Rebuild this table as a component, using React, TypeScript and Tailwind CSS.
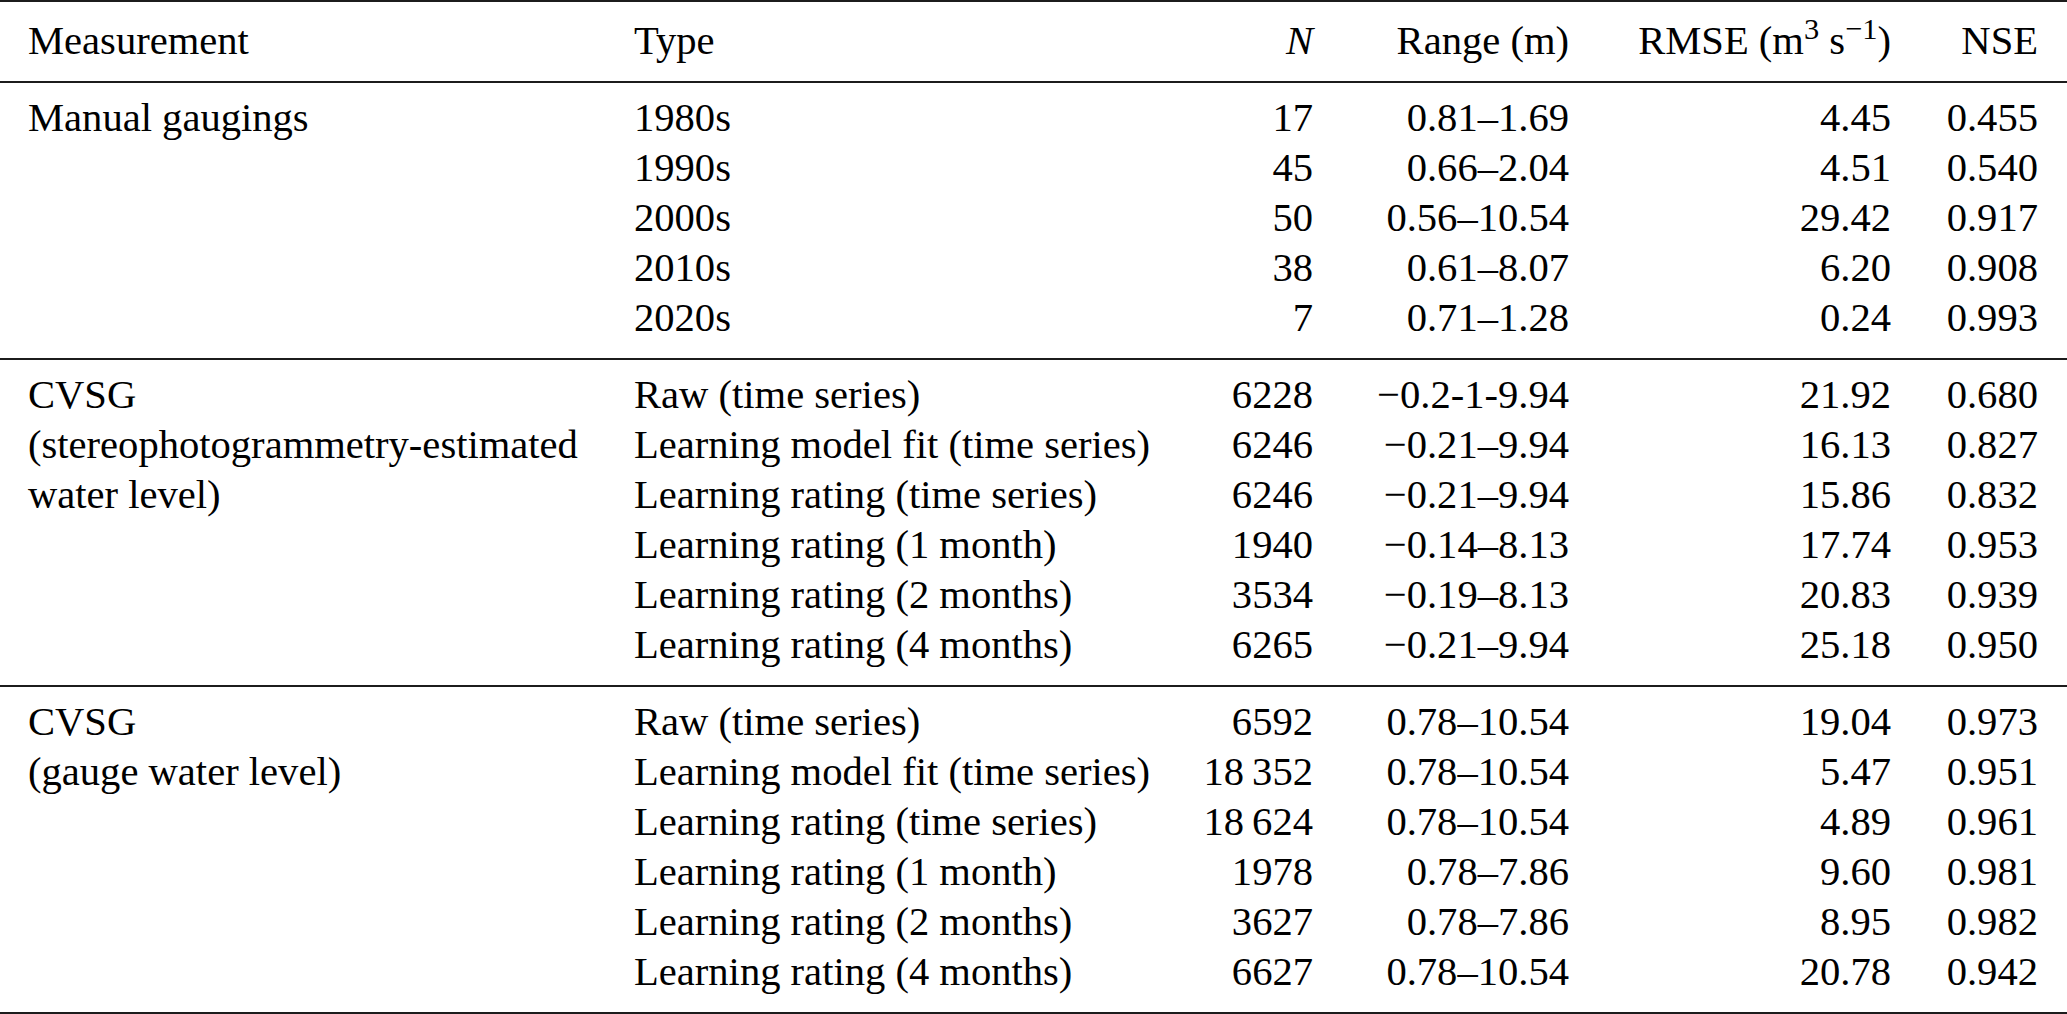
type Row = { type: string; n: string; range: string; rmse: string; nse: string };

type Group = { measurement: string[]; rows: Row[] };

const groups: Group[] = [
  {
    measurement: ["Manual gaugings"],
    rows: [
      { type: "1980s", n: "17", range: "0.81–1.69", rmse: "4.45", nse: "0.455" },
      { type: "1990s", n: "45", range: "0.66–2.04", rmse: "4.51", nse: "0.540" },
      { type: "2000s", n: "50", range: "0.56–10.54", rmse: "29.42", nse: "0.917" },
      { type: "2010s", n: "38", range: "0.61–8.07", rmse: "6.20", nse: "0.908" },
      { type: "2020s", n: "7", range: "0.71–1.28", rmse: "0.24", nse: "0.993" },
    ],
  },
  {
    measurement: ["CVSG", "(stereophotogrammetry-estimated water level)"],
    rows: [
      { type: "Raw (time series)", n: "6228", range: "−0.2-1-9.94", rmse: "21.92", nse: "0.680" },
      { type: "Learning model fit (time series)", n: "6246", range: "−0.21–9.94", rmse: "16.13", nse: "0.827" },
      { type: "Learning rating (time series)", n: "6246", range: "−0.21–9.94", rmse: "15.86", nse: "0.832" },
      { type: "Learning rating (1 month)", n: "1940", range: "−0.14–8.13", rmse: "17.74", nse: "0.953" },
      { type: "Learning rating (2 months)", n: "3534", range: "−0.19–8.13", rmse: "20.83", nse: "0.939" },
      { type: "Learning rating (4 months)", n: "6265", range: "−0.21–9.94", rmse: "25.18", nse: "0.950" },
    ],
  },
  {
    measurement: ["CVSG", "(gauge water level)"],
    rows: [
      { type: "Raw (time series)", n: "6592", range: "0.78–10.54", rmse: "19.04", nse: "0.973" },
      { type: "Learning model fit (time series)", n: "18\u2009352", range: "0.78–10.54", rmse: "5.47", nse: "0.951" },
      { type: "Learning rating (time series)", n: "18\u2009624", range: "0.78–10.54", rmse: "4.89", nse: "0.961" },
      { type: "Learning rating (1 month)", n: "1978", range: "0.78–7.86", rmse: "9.60", nse: "0.981" },
      { type: "Learning rating (2 months)", n: "3627", range: "0.78–7.86", rmse: "8.95", nse: "0.982" },
      { type: "Learning rating (4 months)", n: "6627", range: "0.78–10.54", rmse: "20.78", nse: "0.942" },
    ],
  },
];

function Cells({ row }: { row: Row }) {
  return (
    <div className="grid grid-cols-[520px_159px_256px_322px_147px] whitespace-nowrap">
      <div>{row.type}</div>
      <div className="text-right">{row.n}</div>
      <div className="text-right">{row.range}</div>
      <div className="text-right">{row.rmse}</div>
      <div className="text-right">{row.nse}</div>
    </div>
  );
}

export default function App() {
  return (
    <div
      className="w-[2067px] min-h-[1014px] bg-white text-black text-[40.6px] leading-[50px]"
      style={{ fontFamily: '"Liberation Serif", "Times New Roman", serif' }}
    >
      {/* header */}
      <div className="flex border-t-2 border-[#1c1c1c] pl-[28px] pt-[14px] pb-[15px]">
        <div className="w-[606px] shrink-0">Measurement</div>
        <div className="grid grid-cols-[520px_159px_256px_322px_147px] whitespace-nowrap">
          <div>Type</div>
          <div className="text-right italic">N</div>
          <div className="text-right">Range (m)</div>
          <div className="text-right">
            RMSE (m<sup>3</sup> s<sup>−1</sup>)
          </div>
          <div className="text-right">NSE</div>
        </div>
      </div>

      {groups.map((g, i) => (
        <div
          key={i}
          className={
            i === groups.length - 1
              ? "flex border-y-2 border-[#1c1c1c] pl-[28px] pt-[10px] pb-[15px]"
              : "flex border-t-2 border-[#1c1c1c] pl-[28px] pt-[10px] pb-[15px]"
          }
        >
          <div className="w-[606px] shrink-0 pr-[20px]">
            {g.measurement.map((m, j) => (
              <div key={j}>{m}</div>
            ))}
          </div>
          <div>
            {g.rows.map((r, j) => (
              <Cells key={j} row={r} />
            ))}
          </div>
        </div>
      ))}
    </div>
  );
}
